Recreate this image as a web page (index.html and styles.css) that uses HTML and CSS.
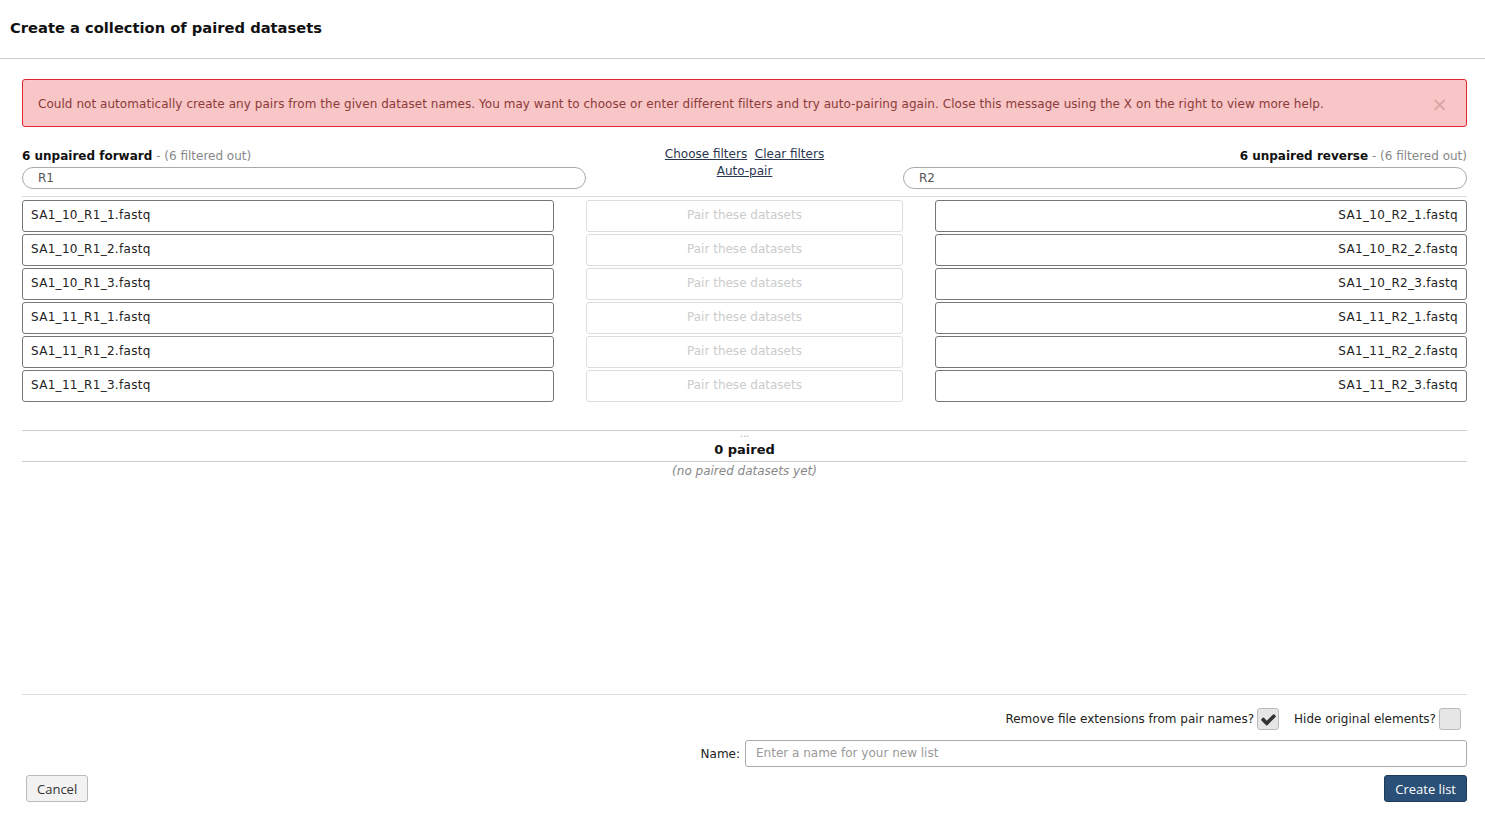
FILE: index.html
```html
<!DOCTYPE html>
<html lang="en">
<head>
    <meta charset="UTF-8">
    <title>Create a collection of paired datasets</title>
    <link rel="stylesheet" href="styles.css">
</head>
<body>
    <div class="modal-header">
        <h4 class="title">Create a collection of paired datasets</h4>
    </div>

    <div class="modal-body">
        <div class="alert">
            <span class="alert-text">Could not automatically create any pairs from the given dataset names. You may want to choose or enter different filters and try auto-pairing again. Close this message using the X on the right to view more help.</span>
            <span class="close">&times;</span>
        </div>

        <div class="pair-header">
            <div class="side forward">
                <div class="side-title"><b>6 unpaired forward</b> - (6 filtered out)</div>
                <div class="filter">R1</div>
            </div>
            <div class="center">
                <div><a href="#">Choose filters</a>&nbsp; <a href="#">Clear filters</a></div>
                <div><a href="#">Auto-pair</a></div>
            </div>
            <div class="side reverse">
                <div class="side-title"><b>6 unpaired reverse</b> - (6 filtered out)</div>
                <div class="filter">R2</div>
            </div>
        </div>

        <div class="unpaired">
            <div class="list forward-list">
                <div class="dataset">SA1_10_R1_1.fastq</div>
                <div class="dataset">SA1_10_R1_2.fastq</div>
                <div class="dataset">SA1_10_R1_3.fastq</div>
                <div class="dataset">SA1_11_R1_1.fastq</div>
                <div class="dataset">SA1_11_R1_2.fastq</div>
                <div class="dataset">SA1_11_R1_3.fastq</div>
            </div>
            <div class="list pair-list">
                <div class="pair-btn">Pair these datasets</div>
                <div class="pair-btn">Pair these datasets</div>
                <div class="pair-btn">Pair these datasets</div>
                <div class="pair-btn">Pair these datasets</div>
                <div class="pair-btn">Pair these datasets</div>
                <div class="pair-btn">Pair these datasets</div>
            </div>
            <div class="list reverse-list">
                <div class="dataset">SA1_10_R2_1.fastq</div>
                <div class="dataset">SA1_10_R2_2.fastq</div>
                <div class="dataset">SA1_10_R2_3.fastq</div>
                <div class="dataset">SA1_11_R2_1.fastq</div>
                <div class="dataset">SA1_11_R2_2.fastq</div>
                <div class="dataset">SA1_11_R2_3.fastq</div>
            </div>
        </div>

        <div class="paired">
            <div class="paired-head">
                <div class="grip">...</div>
                <div class="paired-title">0 paired</div>
            </div>
            <div class="empty">(no paired datasets yet)</div>
        </div>

        <div class="footer">
            <div class="options">
                <label class="opt">Remove file extensions from pair names?
                    <span class="checkbox checked">
                        <svg viewBox="0 0 1792 1792" width="17" height="17"><path d="M1671 566q0 40-28 68l-724 724-136 136q-28 28-68 28t-68-28l-136-136-362-362q-28-28-28-68t28-68l136-136q28-28 68-28t68 28l294 295 656-657q28-28 68-28t68 28l136 136q28 28 28 68z" fill="#333"/></svg>
                    </span>
                </label>
                <label class="opt">Hide original elements?
                    <span class="checkbox"></span>
                </label>
            </div>
            <div class="name-row">
                <span class="name-label">Name:</span>
                <div class="name-input">Enter a name for your new list</div>
            </div>
            <div class="buttons">
                <button class="btn cancel">Cancel</button>
                <button class="btn create">Create list</button>
            </div>
        </div>
    </div>
</body>
</html>
```

FILE: styles.css
```css
body {
    margin: 0;
    font-family: "DejaVu Sans", Verdana, sans-serif;
    font-size: 12px;
    color: #222;
    background: #fff;
}

.modal-header {
    height: 58px;
    border-bottom: 1px solid #ccc;
    padding: 0 10px;
    display: flex;
    align-items: center;
}

.title {
    margin: 0 0 4px;
    font-size: 14.7px;
    font-weight: bold;
    color: #111;
}

.modal-body {
    padding: 20px 18px 0 22px;
}

.alert {
    border: 1px solid #e0262a;
    border-radius: 3px;
    background: #f8c6c6;
    color: #8c3a3a;
    padding: 2px 15px 0;
    box-sizing: border-box;
    height: 48px;
    display: flex;
    align-items: center;
    justify-content: space-between;
    letter-spacing: 0.05px;
}

.close {
    font-size: 20px;
    color: #d9a3a3;
    margin-right: 3px;
}

.pair-header {
    display: grid;
    grid-template-columns: 564px 1fr 564px;
    border-bottom: 1px solid #ddd;
    padding-bottom: 7px;
}

.side-title {
    margin-top: 21px;
    line-height: 16px;
    color: #888;
}

.side-title b {
    color: #111;
}

.reverse .side-title {
    text-align: right;
}

.filter {
    margin-top: 3px;
    height: 20px;
    line-height: 21px;
    border: 1px solid #aaa;
    border-radius: 11px;
    padding-left: 15px;
    color: #555;
}

.center {
    padding-top: 19px;
    line-height: 17px;
    text-align: center;
}

.center a {
    color: #2a3650;
}

.unpaired {
    display: grid;
    grid-template-columns: 532px 1fr 532px;
    column-gap: 32px;
    height: 233px;
    padding-top: 3px;
    box-sizing: border-box;
}

.list {
    display: flex;
    flex-direction: column;
    gap: 2px;
}

.dataset, .pair-btn {
    height: 30px;
    line-height: 29px;
    border: 1px solid #777;
    border-radius: 3px;
    padding: 0 8px;
}

.dataset {
    letter-spacing: 0.3px;
}

.reverse-list .dataset {
    text-align: right;
}

.pair-btn {
    border-color: #ddd;
    color: #ccc;
    text-align: center;
}

.paired {
    height: 264px;
}

.paired-head {
    border-top: 1px solid #ccc;
    border-bottom: 1px solid #ccc;
    text-align: center;
}

.grip {
    height: 8px;
    line-height: 6px;
    font-size: 10px;
    color: #aaa;
}

.paired-title {
    line-height: 22px;
    font-weight: bold;
    font-size: 13px;
    color: #111;
}

.empty {
    text-align: center;
    font-style: italic;
    color: #888;
    line-height: 19px;
}

.footer {
    border-top: 1px solid #ddd;
}

.options {
    display: flex;
    justify-content: flex-end;
    gap: 15px;
    margin-top: 13px;
    padding-right: 6px;
}

.opt {
    display: flex;
    align-items: center;
    gap: 3px;
}

.checkbox {
    width: 20px;
    height: 20px;
    border: 1px solid #bbb;
    border-radius: 3px;
    background: #e6e6e6;
    display: flex;
    align-items: center;
    justify-content: center;
}

.name-row {
    display: flex;
    justify-content: flex-end;
    align-items: center;
    gap: 5px;
    margin-top: 10px;
}

.name-input {
    width: 710px;
    height: 25px;
    line-height: 25px;
    border: 1px solid #aaa;
    border-radius: 3px;
    padding-left: 10px;
    color: #999;
}

.buttons {
    display: flex;
    justify-content: space-between;
    margin-top: 8px;
    padding-left: 4px;
}

.btn {
    height: 27px;
    font-family: "Open Sans", sans-serif;
    font-size: 13px;
    border-radius: 3px;
    padding: 0 10px;
}

.cancel {
    background: #f2f2f2;
    border: 1px solid #bbb;
    color: #333;
}

.create {
    background: #2a5078;
    border: 1px solid #1d3c5c;
    color: #fff;
}
```
